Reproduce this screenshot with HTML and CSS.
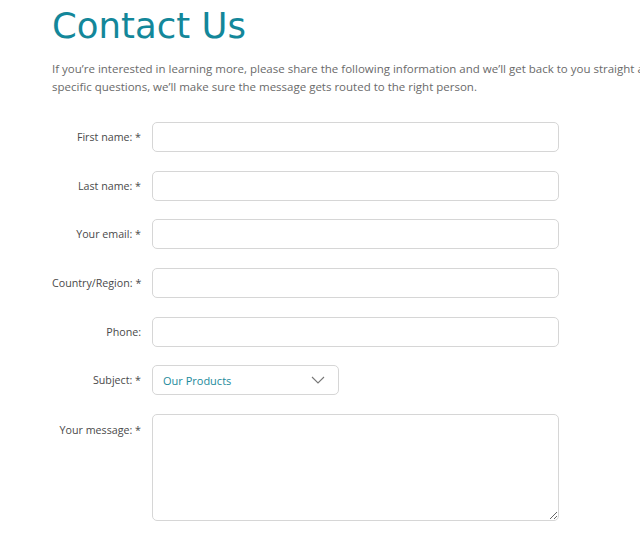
FILE: index.html
```html
<!DOCTYPE html>
<html lang="en">
<head>
<meta charset="utf-8">
<title>Contact Us</title>
<link rel="stylesheet" href="styles.css">
</head>
<body>
<main class="page">
  <h1 class="title">Contact Us</h1>
  <p class="intro">If you’re interested in learning more, please share the following information and we’ll get back to you straight away. If you have any specific questions, we’ll make sure the message gets routed to the right person.</p>
  <form class="form">
    <div class="row">
      <label class="label" for="fn">First name: *</label>
      <input class="field" id="fn" type="text">
    </div>
    <div class="row">
      <label class="label" for="ln">Last name: *</label>
      <input class="field" id="ln" type="text">
    </div>
    <div class="row">
      <label class="label" for="em">Your email: *</label>
      <input class="field" id="em" type="email">
    </div>
    <div class="row">
      <label class="label" for="co">Country/Region: *</label>
      <input class="field" id="co" type="text">
    </div>
    <div class="row">
      <label class="label" for="ph">Phone:</label>
      <input class="field" id="ph" type="text">
    </div>
    <div class="row">
      <label class="label" for="su">Subject: *</label>
      <div class="select">
        <span class="select-value">Our Products</span>
        <svg class="chevron" width="14" height="8" viewBox="0 0 14 8"><path d="M1 1 L7 7 L13 1" fill="none" stroke="#777" stroke-width="1.1"/></svg>
      </div>
    </div>
    <div class="row row-top">
      <label class="label label-top" for="ms">Your message: *</label>
      <div class="textarea-wrap">
        <textarea class="field area" id="ms"></textarea>
      </div>
    </div>
  </form>
</main>
</body>
</html>
```

FILE: styles.css
```css
html, body {
  margin: 0;
  padding: 0;
  background: #fff;
  overflow: hidden;
}
.page {
  width: 780px;
  padding: 0 0 0 52px;
  font-family: "Open Sans", "Liberation Sans", sans-serif;
}
.title {
  margin: 0;
  padding-top: 4px;
  font-family: "DejaVu Sans", sans-serif;
  font-weight: normal;
  font-size: 35.5px;
  line-height: 44px;
  color: #13879a;
  letter-spacing: 0;
}
.intro {
  margin: 12px 0 0;
  font-size: 11.5px;
  line-height: 18px;
  color: #6a6a6a;
  width: 715px;
}
.form {
  display: flex;
  flex-direction: column;
  gap: 18.67px;
  margin-top: 26px;
}
.row {
  display: flex;
  align-items: center;
}
.row-top {
  align-items: flex-start;
}
.label {
  width: 89px;
  text-align: right;
  margin-right: 11px;
  font-size: 10.7px;
  color: #4a4a4a;
  white-space: nowrap;
}
.label-top {
  padding-top: 9px;
}
.field {
  box-sizing: border-box;
  width: 407px;
  height: 30px;
  border: 1px solid #d6d6d6;
  border-radius: 5px;
  background: #fff;
  margin: 0;
  font-family: inherit;
}
.select {
  box-sizing: border-box;
  width: 187px;
  height: 30px;
  border: 1px solid #d6d6d6;
  border-radius: 5px;
  display: flex;
  align-items: center;
  justify-content: space-between;
  padding: 0 13px 0 10px;
}
.select-value {
  font-size: 11px;
  color: #1b8a9b;
}
.area {
  height: 107px;
  display: block;
  resize: vertical;
}
```
